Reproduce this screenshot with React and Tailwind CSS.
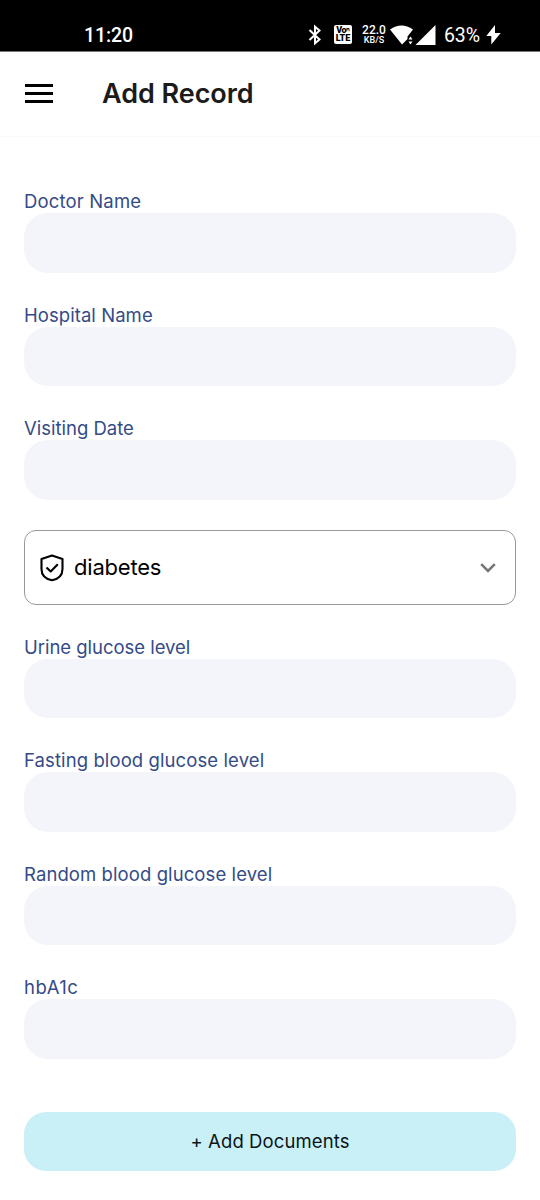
const labelFont = "font-['Inter',sans-serif]";

function StatusBar() {
  return (
    <div className="flex h-[52px] items-start border-b border-[#777] bg-black pl-[84px] font-['Roboto',sans-serif] text-white">
      <span className="mt-[22px] w-[224px] text-[19.5px] leading-[27px] font-medium tracking-[-0.1px]">11:20</span>
      <svg className="mt-[24px] h-[22px] w-[16px] shrink-0" viewBox="0 0 16 22" fill="none" stroke="white" strokeWidth="2">
        <path d="M1.5 6 11.5 15.5 7 19.3V2.7L11.5 6.5 1.5 16" />
      </svg>
      <div className="mt-[25px] ml-[10px] flex h-[19px] w-[18px] shrink-0 flex-col items-center rounded-[2px] bg-white text-[9px] font-black text-black">
        <span className="h-[9px] leading-[10px] tracking-[-0.4px]">Vo<span className="align-[2px] text-[6px] leading-none">ո</span></span>
        <span className="h-[9px] leading-[9px]">LTE</span>
      </div>
      <div className="mt-[24px] ml-[9px] flex w-[26px] shrink-0 flex-col items-center font-medium">
        <span className="h-[12px] text-[12px] leading-[12px]">22.0</span>
        <span className="h-[9px] text-[9px] leading-[9px]">KB/S</span>
      </div>
      <svg className="mt-[24px] ml-[3px] h-[22px] w-[47px] shrink-0" viewBox="0 0 47 22" fill="white">
        <path d="M0 5.5Q11.5-2.5 23 5.5L17.5 12.5V15L12 20.5Z" />
        <path d="M18.5 15.5 20.5 12.5 22.5 15.5ZM18.5 17.5 20.5 20.5 22.5 17.5Z" />
        <path d="M25.5 21 45.5 1V21Z" />
      </svg>
      <span className="mt-[22px] ml-[7px] w-[41px] shrink-0 text-[19.5px] leading-[27px] tracking-[-0.1px]">63%</span>
      <svg className="mt-[24px] ml-px h-[22px] w-[15px] shrink-0" viewBox="0 0 15 22" fill="white">
        <path d="M9 1 .3 12H5.3V20.5L14.7 9H9Z" />
      </svg>
    </div>
  );
}

function Field({ label, tracking }) {
  return (
    <label className="block">
      <span className={`block h-[24px] text-[18.5px] leading-[24px] whitespace-nowrap text-[#344b87] ${labelFont} ${tracking}`}>{label}</span>
      <input className="block h-[59.5px] w-full rounded-[24px] bg-[#f3f5fb] px-4 outline-none" />
    </label>
  );
}

export default function App() {
  return (
    <div className="h-[1200px] w-[540px] overflow-hidden bg-white">
      <StatusBar />
      <header className="flex h-[85px] items-center border-b border-[#fafafa] pl-[25px]">
        <button aria-label="Menu" className="mb-[2px] flex w-[28px] flex-col gap-[5px]">
          <span className="h-[3px] bg-black" />
          <span className="h-[3px] bg-black" />
          <span className="h-[3px] bg-black" />
        </button>
        <h1 className="ml-[49px] font-['Inter',sans-serif] text-[27px] leading-[34px] font-[600] tracking-[-0.05px] text-[#1c1b1b]">Add Record</h1>
      </header>
      <main className="flex flex-col gap-[30px] px-[24px] pt-[52px]">
        <Field label="Doctor Name" tracking="tracking-[0.16px]" />
        <Field label="Hospital Name" tracking="tracking-[0.06px]" />
        <Field label="Visiting Date" tracking="tracking-[0px]" />
        <button className="flex h-[75px] w-full items-center rounded-[12px] border border-[#999] pr-[19px] pl-[15px]">
          <svg className="mt-px h-[28px] w-[24px]" viewBox="0 0 24 28" fill="none" stroke="black" strokeWidth="2.1" strokeLinejoin="round">
            <path d="M12 1.5 22.5 5V15C22.5 21 18.5 25 12 26.3C5.5 25 1.5 21 1.5 15V5Z" />
            <path d="M6.5 13.5 10.7 17.5 17.8 10.3" />
          </svg>
          <span className="ml-[10px] flex-1 text-left font-['Inter',sans-serif] text-[22px] leading-[28px] tracking-[-0.2px] text-black">diabetes</span>
          <svg className="mt-[2px] h-[10px] w-[16px]" viewBox="0 0 16 10" fill="none" stroke="#777" strokeWidth="2.6">
            <path d="M1.2 1.2 8 8 14.8 1.2" />
          </svg>
        </button>
        <Field label="Urine glucose level" tracking="tracking-[-0.03px]" />
        <Field label="Fasting blood glucose level" tracking="tracking-[0.1px]" />
        <Field label="Random blood glucose level" tracking="tracking-[0.09px]" />
        <Field label="hbA1c" tracking="tracking-[0.5px]" />
        <button className="mt-[23px] h-[59.5px] w-full rounded-[22px] bg-[#caf0f7] pt-[2px] font-['Inter',sans-serif] text-[18.5px] tracking-[0.1px] text-[#0b1517]">+ Add Documents</button>
      </main>
    </div>
  );
}
